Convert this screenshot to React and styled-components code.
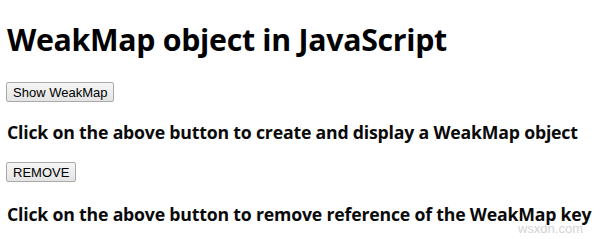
import styled, { createGlobalStyle } from "styled-components";

const GlobalStyle = createGlobalStyle`
  html, body {
    margin: 0;
    padding: 0;
    background: #ffffff;
  }
  body {
    padding: 0 6px;
    font-family: "Open Sans", "Noto Sans", sans-serif;
    color: #000;
  }
`;

const Page = styled.div`
  position: relative;
  height: 239px;
  overflow: hidden;
`;

const Title = styled.h1`
  font-size: 30.3px;
  font-weight: 700;
  letter-spacing: -0.3px;
  margin: 19px 0 0 1px;
  line-height: 42px;
  white-space: nowrap;
`;

const Note = styled.h3`
  font-size: 17.7px;
  font-weight: 700;
  letter-spacing: -0.2px;
  margin: ${({ $top }) => $top}px 0 0 1px;
  line-height: 24px;
  white-space: nowrap;
  color: #0a0a0a;
`;

const Button = styled.button`
  display: block;
  margin-top: ${({ $top }) => $top}px;
  height: 20px;
  padding: 0 6px;
  font-family: "Liberation Sans", Arial, sans-serif;
  font-size: 13px;
  color: #000;
  background: linear-gradient(#f6f6f6, #e4e4e4);
  border: 1px solid #a9a9a9;
  border-radius: 2px;
`;

const Watermark = styled.span`
  position: absolute;
  right: 11px;
  bottom: 3px;
  font-family: "Liberation Sans", Arial, sans-serif;
  font-size: 13px;
  color: #d4d4d4;
`;

export default function App() {
  return (
    <Page>
      <GlobalStyle />
      <Title>WeakMap object in JavaScript</Title>
      <Button $top={21}>Show WeakMap</Button>
      <Note $top={18}>Click on the above button to create and display a WeakMap object</Note>
      <Button $top={18}>REMOVE</Button>
      <Note $top={20}>Click on the above button to remove reference of the WeakMap key</Note>
      <Watermark>wsxdn.com</Watermark>
    </Page>
  );
}
